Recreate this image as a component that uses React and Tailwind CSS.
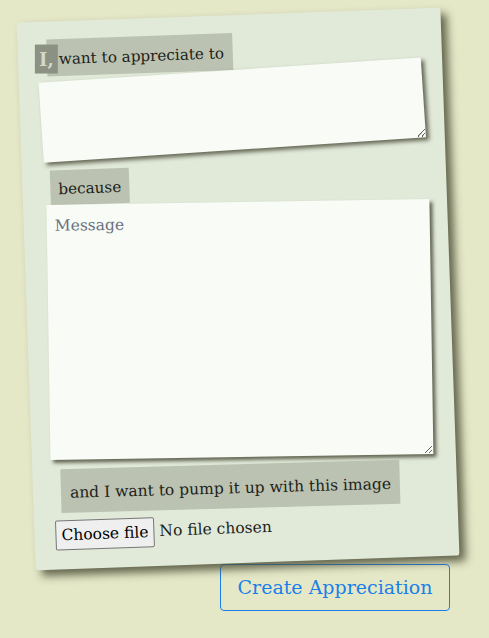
import React from "react";

export default function App() {
  return (
    <div
      className="min-h-[638px] w-full bg-[#e5e8c7] pt-[15px] pl-[26px] text-[#1c1f1a]"
      style={{ fontFamily: '"DejaVu Serif", serif' }}
    >
      <div className="w-[424px]">
        <div className="flex h-[548px] w-[424px] rotate-[-2deg] flex-col rounded-[3px] bg-[#e1e9d9] px-[21px] pt-[18px] shadow-[6px_6px_8px_rgba(78,80,56,0.85)]">
          <div className="relative ml-[8px] flex h-[37px] items-center self-start bg-[#bcc2b1] pl-[12px] pr-[9px] text-[15.2px]">
            <span className="absolute left-[-12px] top-[5px] flex h-[29px] w-[23px] rotate-[2deg] items-center justify-center bg-[#8b9283] text-[18px] font-semibold text-[#d3d8cb]">
              I,
            </span>
            <span className="pt-[4px]">want to appreciate to</span>
          </div>
          <textarea className="h-[80px] w-[383px] shrink-0 rotate-[-1.8deg] bg-[#f8fbf6] p-2 shadow-[3px_3px_4px_rgba(66,68,48,0.8)] outline-none" />
          <div className="ml-[7px] mt-[14px] flex h-[35px] items-center self-start bg-[#bcc2b1] px-[8px] text-[15.2px]">
            <span className="pt-[4px]">because</span>
          </div>
          <textarea
            placeholder="Message"
            className="mt-[3px] h-[255px] w-[383px] shrink-0 rotate-[1.1deg] bg-[#f8fbf6] px-[8px] py-[10px] text-[15.5px] shadow-[3px_3px_4px_rgba(66,68,48,0.8)] outline-none placeholder:text-[#6b7280]"
          />
          <div className="ml-[7px] mt-[7px] flex h-[44px] rotate-[0.4deg] items-center self-start bg-[#bcc2b1] px-[9px] text-[15.5px]">
            <span className="pt-[6px]">and I want to pump it up with this image</span>
          </div>
          <label className="mt-[6px] flex items-center gap-[5px] self-start text-[15.5px]">
            <span className="rounded-[2px] border border-[#767676] bg-[#efefef] px-[5px] py-[2px] leading-[24px] text-black">
              Choose file
            </span>
            <span>No file chosen</span>
            <input type="file" className="hidden" />
          </label>
        </div>
        <div className="mt-[1px] flex justify-end">
          <button className="h-[47px] w-[230px] rounded-[4px] border border-[#1a7fe8] text-[19px] text-[#1a7fe8]">
            Create Appreciation
          </button>
        </div>
      </div>
    </div>
  );
}
